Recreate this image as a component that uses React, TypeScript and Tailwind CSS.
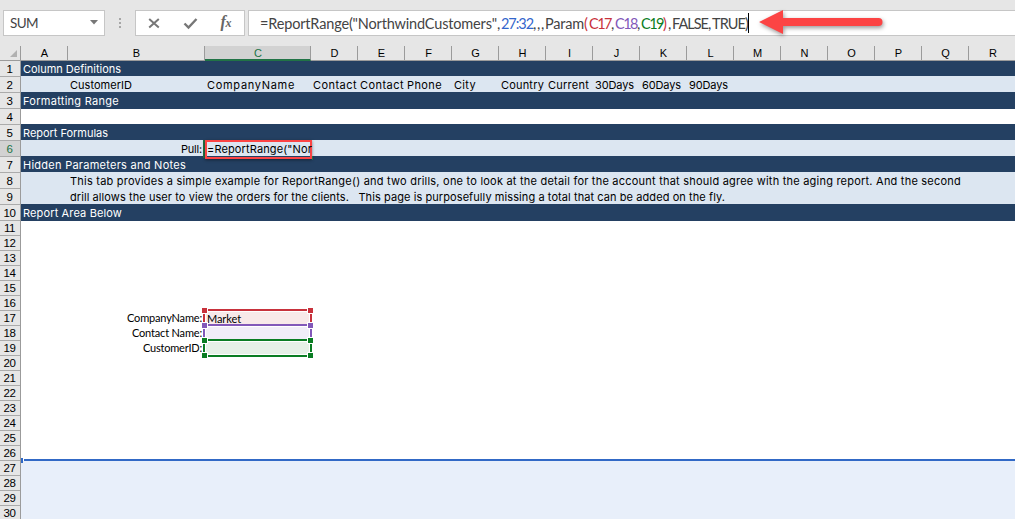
import { ReactNode, useLayoutEffect, useRef } from "react";

/** Text whose letter spacing is adjusted so that it takes the given width. */
function Fit({ width, className = "", children }: { width: number; className?: string; children: ReactNode }) {
  const ref = useRef<HTMLSpanElement>(null);
  useLayoutEffect(() => {
    const el = ref.current;
    if (!el) return;
    const apply = () => {
      el.style.letterSpacing = "0px";
      const count = (el.textContent ?? "").length;
      el.style.letterSpacing = `${(width - el.getBoundingClientRect().width) / count}px`;
    };
    apply();
    document.fonts.ready.then(apply);
  }, [width]);
  return (
    <span ref={ref} className={`block w-max shrink-0 whitespace-pre ${className}`}>
      {children}
    </span>
  );
}

const letters = "DEFGHIJKLMNOPQ".split("");

function ColumnHead({ label, className }: { label: string; className: string }) {
  return (
    <div className={`flex h-[15px] shrink-0 items-center justify-center border-b border-[#9b9b9b] pl-px ${className}`}>
      {label}
    </div>
  );
}

const fields: [string, number][] = [
  ["Contact", 44],
  ["Contact", 44],
  ["Phone", 35],
  ["City", 22],
  ["Country", 43],
  ["Current", 41],
  ["30Days", 39],
  ["60Days", 39],
  ["90Days", 39],
];

const formula: [string, number, string][] = [
  ['=ReportRange("NorthwindCustomers"', 237, ""],
  [",", 4, ""],
  ["27:32", 32, "text-[#3366cc]"],
  [",,,", 12, ""],
  ["Param", 39, ""],
  ["(", 5, "text-[#c8323c]"],
  ["C17", 22, "text-[#c8323c]"],
  [",", 4, ""],
  ["C18", 22, "text-[#8258b9]"],
  [",", 4, ""],
  ["C19", 22, "text-[#0a7d23]"],
  [")", 5, "text-[#c8323c]"],
  [",", 4, ""],
  ["FALSE", 36, ""],
  [",", 4, ""],
  ["TRUE)", 36, ""],
];

function Band({ title, width, className }: { title: string; width: number; className: string }) {
  return (
    <div className={`flex items-center bg-[#244062] pl-[2px] text-white ${className}`}>
      <Fit width={width}>{title}</Fit>
    </div>
  );
}

function Handle({ className }: { className: string }) {
  return <i className={`absolute size-[5px] outline outline-1 outline-white ${className}`} />;
}

function Reference({ line, fill, last = false, children }: { line: string; fill: string; last?: boolean; children?: ReactNode }) {
  return (
    <div className="relative h-[15px] w-[109px]">
      <div className={`absolute inset-x-0 top-[-2px] h-[2px] ${line}`} />
      {last && <div className={`absolute inset-x-0 top-[14px] h-[2px] ${line}`} />}
      <div className={`absolute left-0 top-[2px] h-[9px] w-[2px] ${line}`} />
      <div className={`absolute right-0 top-[2px] h-[9px] w-[2px] ${line}`} />
      <div className={`absolute left-[3px] right-[3px] top-px flex h-[12px] items-center ${fill}`}>{children}</div>
      <Handle className={`left-[-1px] top-[-3px] ${line}`} />
      <Handle className={`right-[-1px] top-[-3px] ${line}`} />
      {last && <Handle className={`bottom-[-2px] left-[-1px] ${line}`} />}
      {last && <Handle className={`bottom-[-2px] right-[-1px] ${line}`} />}
    </div>
  );
}

function FormulaBar() {
  return (
    <div className="flex h-[46px] pt-[10px] text-[#444] font-['Lato','Open_Sans',sans-serif]">
      <div className="ml-[3px] flex h-[26px] w-[102px] items-center justify-between border border-[#c6c6c6] bg-white pl-[6px] pr-[6px]">
        <Fit width={28} className="text-[13.5px]">SUM</Fit>
        <svg width="8" height="5" className="mb-[2px]"><path d="M0 0h8L4 4.5z" fill="#777" /></svg>
      </div>
      <div className="ml-[14px] flex h-[26px] w-[2px] flex-col items-center justify-center gap-[2px]">
        <i className="size-[2px] bg-[#a6a6a6]" />
        <i className="size-[2px] bg-[#a6a6a6]" />
        <i className="size-[2px] bg-[#a6a6a6]" />
      </div>
      <div className="ml-[14px] flex h-[26px] w-[110px] items-center border border-[#c6c6c6] bg-white">
        <svg width="108" height="24" fill="none" stroke="#777">
          <path d="M13.200 8l9.600 8.500M22.800 8l-9.600 8.500" strokeWidth="2" />
          <path d="M48.500 12.500l4 4 8-8.500" strokeWidth="2.400" />
          <text x="84.500" y="16" fill="#666" stroke="none" className="font-['Liberation_Serif',serif] text-[16px] font-bold italic">f</text>
          <text x="89.500" y="16" fill="#666" stroke="none" className="font-['Liberation_Serif',serif] text-[12px] font-bold italic">x</text>
        </svg>
      </div>
      <div className="relative ml-[3px] flex h-[26px] flex-1 items-center border border-r-0 border-[#c6c6c6] bg-white pl-[11px]">
        <div className="flex pt-px text-[14.5px]">
          {formula.map(([text, width, colour], i) => (
            <Fit key={i} width={width} className={colour}>{text}</Fit>
          ))}
        </div>
        <i className="absolute left-[499px] top-[2px] h-[20px] w-px bg-black" />
        <svg width="134" height="34" className="absolute left-[507px] top-[-4px] drop-shadow-[1px_2px_2px_rgba(0,0,0,0.4)]">
          <path d="M3 15L27 3v8h95.500a4 4 0 0 1 0 8H27v8z" fill="#fc4444" />
        </svg>
      </div>
    </div>
  );
}

export default function App() {
  return (
    <div className="h-[519px] w-[1015px] overflow-hidden bg-[#e6e6e6] text-black">
      <FormulaBar />
      <div className="flex h-[15px] overflow-hidden text-[11px] leading-none font-['Liberation_Sans',sans-serif]">
        <div className="flex w-[21px] shrink-0 items-end justify-end border-b border-r border-[#9b9b9b] pb-[3px] pr-[3px]">
          <svg width="7" height="7"><path d="M7 0v7H0z" fill="#b1b1b1" /></svg>
        </div>
        <ColumnHead label="A" className="w-[47px] border-r" />
        <ColumnHead label="B" className="w-[137px] border-r" />
        <div className="flex w-[106px] shrink-0 items-center justify-center border-b-2 border-r border-b-[#217346] border-r-[#9b9b9b] bg-[#d2d2d2] pl-px pt-px text-[#217346]">C</div>
        {letters.map((l) => (
          <ColumnHead key={l} label={l} className="w-[47px] border-r" />
        ))}
        <ColumnHead label="R" className="w-[47px]" />
      </div>
      <div className="flex">
        <div className="w-[21px] shrink-0 border-r border-[#9b9b9b] text-[11.5px] leading-none font-['Liberation_Sans',sans-serif]">
          {Array.from({ length: 30 }, (_, i) => i + 1).map((n) => (
            <div
              key={n}
              className={`flex items-center justify-center border-b border-[#ababab] pr-px tracking-[-0.5px] ${n <= 10 ? "h-[16px] pt-[2px]" : "h-[15px] pt-[2px]"} ${n === 6 ? "bg-[#d2d2d2] text-[#217346]" : ""}`}
            >
              {n}
            </div>
          ))}
        </div>
        <div className="relative flex-1 bg-white text-[11px] leading-none font-['Inter',sans-serif]">
          <Band title="Column Definitions" width={98} className="h-[15px] pt-[2px]" />
          <div className="flex h-[16px] items-center bg-[#dce6f1] pt-[3px]">
            <div className="ml-[49px] w-[137px]"><Fit width={62}>CustomerID</Fit></div>
            <div className="w-[106px]"><Fit width={88}>CompanyName</Fit></div>
            {fields.map(([name, width], i) => (
              <div key={i} className="w-[47px]">
                <Fit width={width}>{name}</Fit>
              </div>
            ))}
          </div>
          <Band title="Formatting Range" width={96} className="h-[17px] pt-px" />
          <div className="h-[15px]" />
          <Band title="Report Formulas" width={85} className="h-[16px] pt-[3px]" />
          <div className="flex h-[16px] items-center bg-[#dce6f1] pt-[2px]">
            <div className="flex w-[181px] justify-end"><Fit width={21}>Pull:</Fit></div>
            <div className="relative mb-px ml-[1px] h-[18px] w-[2px] shrink-0 bg-[#217346]" />
            <div className="relative flex h-[19px] w-[107px] shrink-0 items-center border-2 border-[#fc4444] shadow-[0_1px_3px_rgba(0,0,0,0.45)]">
              <Fit width={105}>=ReportRange("Nor</Fit>
              <i className="absolute bottom-[-3px] right-[-3px] h-[4px] w-px bg-[#217346]" />
            </div>
          </div>
          <Band title="Hidden Parameters and Notes" width={163} className="h-[16px] pt-[3px]" />
          <div className="h-[32px] bg-[#dce6f1] pl-[49px]">
            <div className="flex h-[16px] items-center pt-[2px]">
              <Fit width={891}>This tab provides a simple example for ReportRange() and two drills, one to look at the detail for the account that should agree with the aging report. And the second</Fit>
            </div>
            <div className="flex h-[16px] items-center pt-[2px]">
              <Fit width={655}>drill allows the user to view the orders for the clients.   This page is purposefully missing a total that can be added on the fly.</Fit>
            </div>
          </div>
          <Band title="Report Area Below" width={99} className="h-[17px] pt-[2px]" />
          <div className="flex h-[240px] pt-[90px] text-[11px] font-['Lato','Open_Sans',sans-serif]">
            <div className="flex w-[181px] flex-col items-end">
              <div className="flex h-[15px] items-center pb-[2px]"><Fit width={75}>CompanyName:</Fit></div>
              <div className="flex h-[15px] items-center pb-[2px]"><Fit width={70}>Contact Name:</Fit></div>
              <div className="flex h-[15px] items-center pb-[2px]"><Fit width={59}>CustomerID:</Fit></div>
            </div>
            <div className="ml-[1px]">
              <Reference line="bg-[#c8323c]" fill="bg-[#f8e9e9]">
                <Fit width={34} className="ml-px">Market</Fit>
              </Reference>
              <Reference line="bg-[#8258b9]" fill="bg-[#f1edf8]" />
              <Reference line="bg-[#0a7d23]" fill="bg-[#e6f0e7]" last />
            </div>
          </div>
          <div className="relative h-[58px] bg-[#e8effa]">
            <div className="absolute left-[3px] right-0 top-[-2px] h-[2px] bg-[#3169c6]" />
            <div className="absolute left-0 top-[-3px] h-[5px] w-[2px] bg-[#3169c6]" />
          </div>
        </div>
      </div>
    </div>
  );
}
